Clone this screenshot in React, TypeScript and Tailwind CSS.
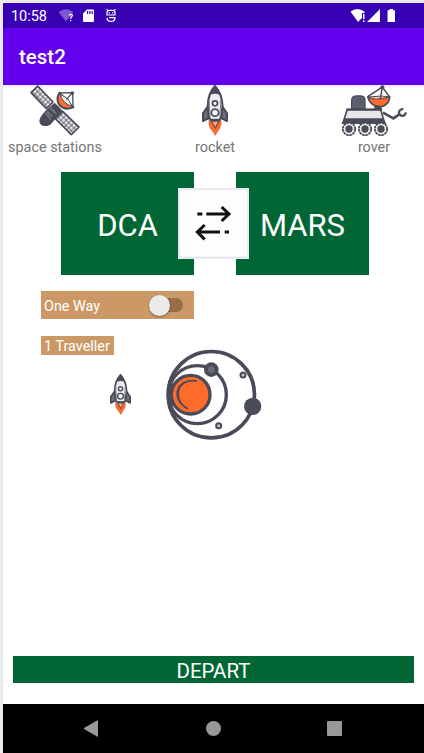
import React from "react";

const INK = "#4a4b59";
const ORANGE = "#ff6b2b";

function Satellite() {
  return (
    <svg className="block h-[51px] w-[50px]" viewBox="90 15 150 153">
      <defs>
        <pattern id="cells" width="11" height="11" patternUnits="userSpaceOnUse" patternTransform="translate(113 19) rotate(45)">
          <rect width="11" height="11" fill={INK} />
          <rect x="1.500" y="1.500" width="8.500" height="8.500" fill="#f5f5f8" />
        </pattern>
      </defs>
      <path d="M113 18 159 66 139 86 93 38Z" fill="url(#cells)" stroke={INK} strokeWidth="5" strokeLinejoin="round" />
      <path d="M188 94 237 141 214 164 166 116Z" fill="url(#cells)" stroke={INK} strokeWidth="5" strokeLinejoin="round" />
      <path d="M138 91 164 68 188 92 156 128Q150 138 135 138 120 138 118 124 118 112 138 91Z" fill={INK} />
      <path d="M140 94 156 110M151 83 168 101" stroke="#747684" strokeWidth="6" />
      <path d="M134 98Q146 105 152 120" stroke="#b7b8c1" strokeWidth="2" fill="none" />
      <path d="M178 38Q166 59 179 76 194 92 220 82Z" fill={ORANGE} stroke={INK} strokeWidth="6" strokeLinejoin="round" />
      <path d="M180 42Q188 72 217 79L203 56Z" fill="#f5f3f5" stroke={INK} strokeWidth="3" />
      <path d="M178 39 218 38 219 81M218 38 199 59" fill="none" stroke={INK} strokeWidth="4" />
      <circle cx="217" cy="39" r="5.500" fill={INK} />
    </svg>
  );
}

function Rocket({ className }: { className: string }) {
  return (
    <svg className={className} viewBox="52 14 76 153" preserveAspectRatio="none">
      <path d="M73 119 79 125H101L107 119Q110 140 98 152L91 165 83 152Q70 140 73 119Z" fill={ORANGE} stroke="#c9542d" strokeWidth="2" />
      <path d="M81 125 91 143 101 124" fill="#ffad8b" stroke="#8b4a3c" strokeWidth="4" />
      <path d="M69 78 55 99V122L72 113ZM111 78 125 99V122L108 113Z" fill="#6c6f80" stroke={INK} strokeWidth="6" strokeLinejoin="round" />
      <path d="M90 17Q69 41 69 77L73 114 81 121H100L107 114 112 77Q111 42 90 17Z" fill="#ececf0" stroke={INK} strokeWidth="6" />
      <path d="M90 16Q80 27 75 44 90 36 106 44 100 27 90 16Z" fill={INK} />
      <path d="M73 59 76 112M107 59 104 112" stroke="#85889a" strokeWidth="3" />
      <circle cx="90" cy="69" r="7.500" fill="#f7f7fa" stroke={INK} strokeWidth="5" />
      <circle cx="90" cy="97" r="10.500" fill="#f7f7fa" stroke={INK} strokeWidth="5" />
      <path d="M76 119H105" stroke={INK} strokeWidth="7" />
    </svg>
  );
}

function Rover() {
  return (
    <svg className="block h-[51px] w-[66px]" viewBox="47 15 198 153">
      <path d="M79 86V61Q79 48 95 48H107Q119 49 119 63V86Z" fill="#5e6070" stroke={INK} strokeWidth="4" />
      <circle cx="104" cy="64" r="4" fill="#a9abb7" stroke="#343540" strokeWidth="3" />
      <path d="M147 88V77L160 70 171 88Z" fill={INK} />
      <path d="M66 88H166L177 128H53Z" fill="#e8e8eb" stroke={INK} strokeWidth="5" strokeLinejoin="round" />
      <path d="M63 86H168L171 92H62Z" fill={INK} />
      <path d="M58 115H175L183 132H48Z" fill={INK} />
      <path d="M173 98 204 115 221 104" fill="none" stroke={INK} strokeWidth="8" strokeLinejoin="round" />
      <path d="M241 97A10 10 0 1 1 234 88" fill="none" stroke={INK} strokeWidth="7" />
      <path d="M127 51Q161 59 193 50 193 72 169 80 136 81 127 51Z" fill={ORANGE} stroke={INK} strokeWidth="5" strokeLinejoin="round" />
      <path d="M129 51Q148 64 191 51L168 48Z" fill="#ffc0a4" stroke={INK} strokeWidth="3" />
      <path d="M127 50 171 21 192 50M171 21 165 58" fill="none" stroke={INK} strokeWidth="4.500" />
      <circle cx="171" cy="22" r="6" fill={INK} />
      {[71, 119, 167].map((x) => (
        <g key={x}>
          <circle cx={x} cy="147" r="18.500" fill="#f3f3f5" stroke={INK} strokeWidth="5.500" strokeDasharray="8 1.700" />
          <circle cx={x} cy="147" r="11" fill={INK} />
        </g>
      ))}
    </svg>
  );
}

function Orbit() {
  return (
    <svg className="block h-[91px] w-[96px]" viewBox="33 27 288 273" fill="none" stroke={INK}>
      <circle cx="169" cy="164" r="129.500" strokeWidth="11" />
      <circle cx="127" cy="164" r="87" strokeWidth="10" />
      <path d="M42 125Q34 164 42 203L53 195V133Z" fill={INK} strokeWidth="4" />
      <circle cx="107" cy="164" r="58" fill={ORANGE} strokeWidth="10" />
      <path d="M127 123C52 106 46 193 100 206 55 180 67 126 127 123Z" fill={INK} stroke="none" />
      <path d="M127 123C61 112 48 184 100 206 64 181 72 128 127 123Z" fill={ORANGE} stroke="none" />
      <path d="M126 123C66 112 48 181 99 206" strokeWidth="5" />
      <circle cx="169" cy="89" r="16" fill="#686b7b" strokeWidth="12" />
      <circle cx="264" cy="105" r="7.500" fill="#c5c6ce" strokeWidth="6" />
      <circle cx="191" cy="257" r="7.500" fill="#c5c6ce" strokeWidth="6" />
      <circle cx="293" cy="199" r="26" fill={INK} stroke="none" />
    </svg>
  );
}

function StatusBar() {
  return (
    <div className="flex h-[25px] items-center bg-[#3700b3] pl-2 text-white">
      <span className="w-[47px] pt-[3px] text-[14.5px] leading-none tracking-[-0.05px]">10:58</span>
      <svg className="h-[14px] w-[61px]" viewBox="58 9 61 14" fill="#fff">
        <path d="M58.5 12Q66 6.500 73.500 12L66 21.500Z" opacity=".35" />
        <path d="M69.300 15.700Q69.500 14.200 71 14.300 72.800 14.600 72.100 16.200L70.700 17.700V18.800M70.700 20V21" fill="none" stroke="#fff" strokeWidth="1.300" />
        <path fillRule="evenodd" d="M87 9.500H93Q94 9.500 94 10.500V21Q94 22 93 22H84Q83 22 83 21V13.500ZM87 11V14H88.200V11ZM89.300 11V14H90.500V11ZM91.600 11V14H92.800V11Z" />
        <path d="M107 15V12.500Q107 10.300 109 10.300H113Q115 10.300 115 12.500V15ZM107 17.700Q107 21.400 111 21.400 115 21.400 115 17.700H109" fill="none" stroke="#fff" strokeWidth="1.200" />
        <path d="M108.700 12.300H110V13.500H108.700ZM112 12.300H113.300V13.500H112ZM106 9H107.200L108.200 10.300H107ZM116 9H114.800L113.800 10.300H115Z" />
      </svg>
      <svg className="ml-auto mr-[28px] h-[14px] w-[46px]" viewBox="350 9 46 14" fill="#fff">
        <path d="M350.500 11.500Q357.500 6.500 364.500 11.500V13H362V18L358 22Z" />
        <path d="M363 14H364.500V19H363ZM363 20.300H364.500V22H363ZM367 22 380 9V22Z" />
        <path d="M389.500 9H393V10.300H395V22H387.500V10.300H389.500Z" />
      </svg>
    </div>
  );
}

export default function App() {
  return (
    <div className="flex h-[753px] w-[424px] flex-col overflow-hidden bg-[#ebebed] pl-[3px] pt-[3px] font-[Roboto,sans-serif]">
      <StatusBar />
      <header className="flex h-[57px] shrink-0 items-center bg-[#6200ee] pl-4 pt-[2px] text-[20.5px] font-medium text-white">
        test2
      </header>
      <main className="flex h-[619px] shrink-0 flex-col bg-white">
        <div className="flex h-[87px] justify-between bg-linear-to-b from-[#e9e9e9] from-0% to-white to-[4px] pl-[5px] pr-[17px] text-[14.4px] leading-[24px] text-[#757575]">
          <div className="flex w-[94px] flex-col items-center">
            <Satellite />
            <span className="whitespace-nowrap">space stations</span>
          </div>
          <div className="ml-[27px] flex w-[50px] flex-col items-center">
            <Rocket className="block h-[51px] w-[26px]" />
            <span>rocket</span>
          </div>
          <div className="ml-[40px] flex w-[66px] flex-col items-center">
            <Rover />
            <span>rover</span>
          </div>
        </div>

        <div className="flex h-[103px] items-start pl-[58px] text-[31px] leading-none text-white">
          <div className="flex h-[103px] w-[133px] items-center justify-center bg-[#006633] pt-1">DCA</div>
          <div className="z-10 -mx-4 mt-4 h-[71px] w-[71px] shrink-0 bg-[#f5f6fa]">
            <svg className="block h-[71px] w-[71px]" viewBox="24 24 213 213" fill="none" stroke="#111">
              <rect x="27" y="27" width="207" height="206" rx="8" fill="#fdfdfe" stroke="#e2e3ec" strokeWidth="5" />
              <path d="M82 102H97M109 102H178M155 81 177 102 155 123M177 156H164M150 156H81M104 135 82 156 104 178" strokeWidth="9" />
            </svg>
          </div>
          <div className="ml-[3px] flex h-[103px] w-[133px] items-center justify-center bg-[#006633] pt-1">MARS</div>
        </div>

        <div className="ml-[38px] mt-4 flex h-[28px] w-[153px] items-center justify-between bg-[#cc9966] pl-[3px] pr-[11px] text-[14.400px] text-white">
          <span className="pt-[3px]">One Way</span>
          <div className="flex h-[14px] w-[33px] items-center rounded-full bg-[#966f49]">
            <div className="-ml-px size-[21px] rounded-full bg-[#ebebeb] shadow-[0_1px_2px_rgba(0,0,0,0.4)]" />
          </div>
        </div>
        <div className="ml-[38px] mt-[17px] flex h-[19px] w-[73px] items-center whitespace-nowrap bg-[#cc9966] pl-[3px] text-[14.400px] text-white">
          <span className="pt-0.5">1 Traveller</span>
        </div>

        <div className="-mt-[6px] ml-[107px] flex items-start gap-[35px]">
          <Rocket className="mt-[25px] block h-[41px] w-[21px]" />
          <Orbit />
        </div>

        <div className="mb-[21px] ml-[10px] mt-auto flex h-[27px] w-[401px] items-center justify-center bg-[#006633] pt-1 text-[20.500px] leading-none text-white">
          DEPART
        </div>
      </main>
      <nav className="flex h-[49px] shrink-0 items-center bg-black pl-[81px]">
        <svg className="h-[17px] w-[14px]" viewBox="0 0 14 17" fill="#999"><path d="M14 0V17L0 9V8Z" /></svg>
        <div className="ml-[108px] size-[15px] rounded-full bg-[#999]" />
        <div className="ml-[106px] size-[15px] rounded-[1px] bg-[#999]" />
      </nav>
    </div>
  );
}
